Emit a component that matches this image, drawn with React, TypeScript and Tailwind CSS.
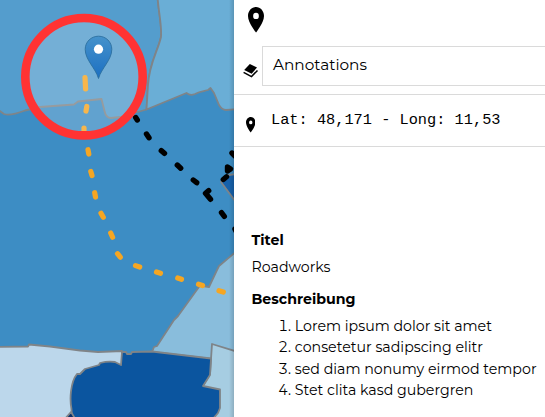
import React from "react";

const REGION_LINE = "#7f8488";

const orangeDashes = [
  "M85 77.5L85.6 89", "M86.8 106.5L86 111", "M84 128L84 133",
  "M88 149.7L88.8 154", "M90.8 171.5L92 175.5", "M94.7 192.7L95.5 197",
  "M101 213.3L103.3 217.3", "M110.7 233L112.6 237.2", "M117.5 253.7L120.3 257.2",
  "M135.5 265.6L139.7 267", "M156.5 272L160.5 273.3", "M177.7 278L181.5 279.3",
  "M198.5 284.2L202.5 285.5", "M219 290.7L223.3 292",
];

const blackDashes = [
  "M135.7 117.5L137.3 120", "M146.5 134L149 137.7", "M161.3 150.7L164.5 153.3",
  "M177.3 165L180.7 168.2", "M193.3 180L196.7 182.7", "M208.7 190.7L205.5 193.3L210.5 199.3",
  "M221.5 212.7L224.3 216.3", "M235 229L236 231", "M223.3 179.5L226.5 176.8",
  "M227.5 167L230.5 169L227.5 171Z", "M232 153L235 156",
];

function MapView() {
  return (
    <svg className="block h-[417px] w-[234px] shrink-0" viewBox="0 0 234 417">
      <defs>
        <linearGradient id="pin" x1="0" y1="0" x2="0" y2="1">
          <stop offset="0" stopColor="#4592cb" />
          <stop offset="1" stopColor="#1b6fc2" />
        </linearGradient>
        <linearGradient id="edge" x1="0" y1="0" x2="1" y2="0">
          <stop offset="0" stopColor="#000" stopOpacity="0" />
          <stop offset="1" stopColor="#000" stopOpacity="0.15" />
        </linearGradient>
      </defs>
      <rect width="234" height="417" fill="#3d8dc4" />
      <g stroke={REGION_LINE} strokeWidth="1.8" strokeLinejoin="round">
        <path fill="#549dcd" d="M-3-3H157.5C159 15 162 26 161 37C158 51 149.500 62 148 85L146.500 109.500L120 117L111 118Q106 118 104.500 111L101.500 99L78 101.500L74 104.500L40 107L25 110.500C16 114 9 116 4 114L-3 109Z" />
        <path fill="#6aaed6" d="M157.500-3C159 15 162 26 161 37C158 51 149.500 62 148 85L146.500 109.500L186.500 93Q190 96 195 94C200 91 205 91 208 90L210.500 88L214 93L219 105Q222 110 226 110L238 109V-3Z" />
        <path fill="#1661ab" d="M221 182L229 175L238 174V205Z" />
        <path fill="#89bddc" d="M238 250L219 266L217 270L209 287L200 285.500L178 316L174 320L157 346L154 347L152 352L212 359L238 360Z" />
        <path fill="#bcd7eb" d="M-3 347L28 346.500L29 344.500L50 346.500L80 350.500L98 352L122 351V420H-3Z" />
        <path fill="#a6cde2" d="M212 344L238 352V420H205L203 386L210 374Z" />
        <path fill="#0b559f" d="M72 420L71.500 409C69.500 399 70.500 382 77 374L80 374L85 369L99 365L100 363Q108 361 115 362L121 365L122 352L126 352L127 354H131L132 352L152 351.500L211 358.500L210 375L203 386L220 389.500V408L218 413L212 420Z" />
        <path fill="#08306b" d="M64 420L71 412L76 420Z" />
      </g>
      <g fill="none" stroke="#f5a623" strokeWidth="5.200" strokeLinecap="round">
        {orangeDashes.map((d) => <path key={d} d={d} />)}
      </g>
      <g stroke="#000" strokeWidth="5.400" strokeLinecap="round" strokeLinejoin="round">
        {blackDashes.map((d) => <path key={d} d={d} fill={d.endsWith("Z") ? "#000" : "none"} />)}
      </g>
      <circle cx="84" cy="76.700" r="58.700" fill="#fff" fillOpacity="0.19" />
      <path fill="url(#pin)" stroke="#2b6f9f" strokeWidth="0.900" d="M98.500 78.500C95.500 68 85.200 60 85.200 49.300C85.200 41.900 91.100 36.200 98.500 36.200S111.800 41.900 111.800 49.300C111.800 60 101.500 68 98.500 78.500Z" />
      <circle cx="98.500" cy="49.200" r="4.600" fill="#fff" />
      <circle cx="84" cy="76.700" r="58.700" fill="none" stroke="#ff3333" strokeWidth="8.600" />
      <rect x="229" width="5" height="417" fill="url(#edge)" />
    </svg>
  );
}

function Pin({ className }: { className: string }) {
  return (
    <svg className={className} viewBox="5 2 14 20" preserveAspectRatio="none">
      <path d="M12 2C8.130 2 5 5.130 5 9c0 5.250 7 13 7 13s7-7.750 7-13c0-3.870-3.130-7-7-7zm0 9.500a2.500 2.500 0 0 1 0-5 2.500 2.500 0 0 1 0 5z" />
    </svg>
  );
}

function Layers() {
  return (
    <svg className="ml-[9px] mt-[18px] h-[15px] w-[16px]" viewBox="0 0 16 15">
      <path d="M6.800 0L14 3.600L8.700 9.800L1.200 6Z" />
      <path d="M.6 8.300L8.500 12.600L14.500 6.400" fill="none" stroke="#000" strokeWidth="1.500" />
    </svg>
  );
}

export default function App() {
  return (
    <main className="flex h-[417px] w-[545px] overflow-hidden bg-white font-['Montserrat','Inter',sans-serif] text-[14px] text-black">
      <MapView />
      <aside className="flex min-w-0 flex-1 flex-col">
        <div className="h-[46px] pl-[14px] pt-[7px]">
          <Pin className="h-[25.500px] w-4" />
        </div>
        <div className="flex h-[49px] border-b border-[#dadada]">
          <div className="w-7 shrink-0"><Layers /></div>
          <div className="flex h-10 flex-1 items-center border border-r-0 border-[#dadada] pl-[10px] pb-px">
            <span className="text-[15.300px]">Annotations</span>
          </div>
        </div>
        <div className="flex h-[52px] border-b border-[#dadada]">
          <div className="w-[37px] shrink-0 pl-[11.500px] pt-[22px]">
            <Pin className="h-[15.500px] w-[9.500px]" />
          </div>
          <div className="whitespace-pre pt-[13px] font-['Liberation_Mono',monospace] text-[15.300px] leading-6">Lat: 48,171 - Long: 11,53</div>
        </div>
        <section className="whitespace-nowrap pl-[17.500px] pt-[83px]">
          <h2 className="h-[27px] text-[14.200px] font-bold leading-[21px]">Titel</h2>
          <p className="h-8 text-[14.200px] leading-[21px]">Roadworks</p>
          <h2 className="h-[27px] text-[14.200px] font-bold leading-[21px]">Beschreibung</h2>
          <ol className="list-decimal pl-[43.300px] text-[14.200px] leading-[21.300px]">
            <li>Lorem ipsum dolor sit amet</li>
            <li>consetetur sadipscing elitr</li>
            <li>sed diam nonumy eirmod tempor</li>
            <li>Stet clita kasd gubergren</li>
          </ol>
        </section>
      </aside>
    </main>
  );
}
